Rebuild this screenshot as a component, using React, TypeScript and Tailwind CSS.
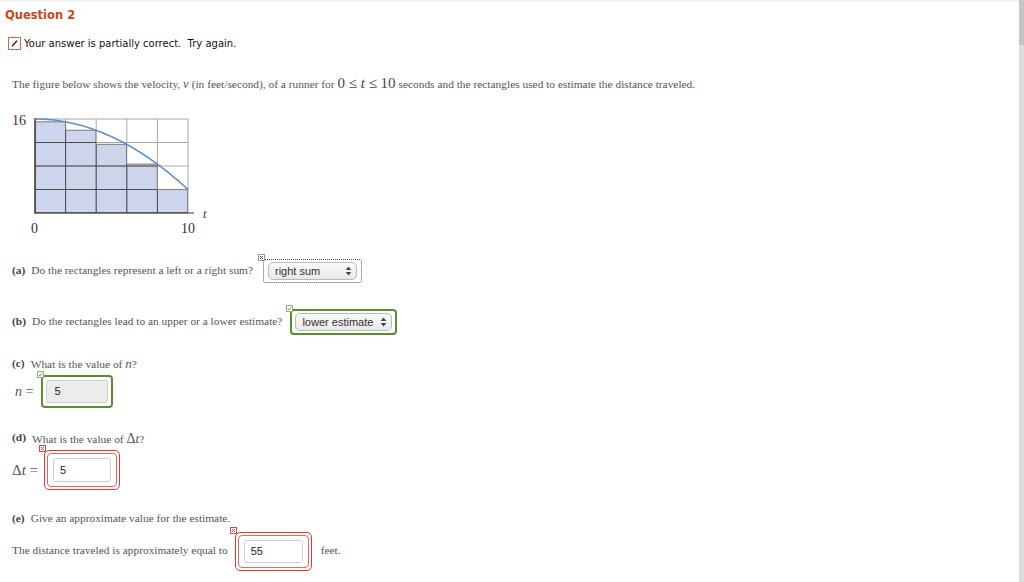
import React from "react";

const serif = { fontFamily: '"Liberation Serif", "Times New Roman", serif' };

function Arrows() {
  return (
    <svg width="7" height="10" viewBox="0 0 7 10" className="shrink-0">
      <path d="M3.5 0.5 L6.3 4 L0.7 4 Z" fill="#444" />
      <path d="M3.5 9.5 L6.3 6 L0.7 6 Z" fill="#444" />
    </svg>
  );
}

function Badge({ kind }: { kind: "x" | "xred" | "check" }) {
  const border = kind === "xred" ? "#e04a3a" : kind === "check" ? "#8fb57a" : "#9a9a9a";
  return (
    <svg width="7" height="7" viewBox="0 0 7 7" className="absolute -left-[6px] -top-[6px] bg-white">
      <rect x="0.5" y="0.5" width="6" height="6" fill="#fff" stroke={border} />
      {kind === "check" ? (
        <path d="M1.8 3.8 L3 5 L5.3 2" fill="none" stroke="#5e9a44" strokeWidth="0.9" />
      ) : (
        <path d="M2 2 L5 5 M5 2 L2 5" stroke={kind === "xred" ? "#e04a3a" : "#444"} strokeWidth="0.9" />
      )}
    </svg>
  );
}

function SelectBox({ label, w }: { label: string; w: string }) {
  return (
    <div
      className={`${w} flex items-center justify-between rounded-[5px] border border-[#b8b8b8] bg-gradient-to-b from-[#fafafa] to-[#e9e9e9] pl-[6px] pr-[4px] text-[11px] text-[#333]`}
      style={{ fontFamily: '"Liberation Sans", Arial, sans-serif' }}
    >
      <span>{label}</span>
      <Arrows />
    </div>
  );
}

function Chart() {
  const cols = [35, 65.6, 96.2, 126.8, 157.4, 188];
  const rows = [9, 32.5, 56, 79.5, 103];
  const tops = [11.8, 20.3, 34.4, 54.1, 79.5];
  return (
    <svg width="220" height="136" viewBox="0 0 220 136" className="block">
      <defs>
        <clipPath id="rc">
          {tops.map((t, i) => (
            <rect key={i} x={cols[i]} y={t} width={cols[i + 1] - cols[i]} height={103 - t} />
          ))}
        </clipPath>
      </defs>
      {tops.map((t, i) => (
        <rect key={i} x={cols[i]} y={t} width={cols[i + 1] - cols[i]} height={103 - t} fill="#cdd5ec" />
      ))}
      <g stroke="#a8a8a8" strokeWidth="1">
        {cols.map((c, i) => (
          <line key={"v" + i} x1={c} y1={9} x2={c} y2={103} />
        ))}
        {rows.map((r, i) => (
          <line key={"h" + i} x1={35} y1={r} x2={188} y2={r} />
        ))}
      </g>
      <g stroke="#4a4a4a" strokeWidth="1" clipPath="url(#rc)">
        {cols.map((c, i) => (
          <line key={"dv" + i} x1={c} y1={0} x2={c} y2={110} />
        ))}
        {rows.map((r, i) => (
          <line key={"dh" + i} x1={30} y1={r} x2={195} y2={r} />
        ))}
      </g>
      {tops.map((t, i) => (
        <line key={"t" + i} x1={cols[i]} y1={t} x2={cols[i + 1]} y2={t} stroke="#8a8a8a" strokeWidth="1.2" />
      ))}
      <line x1={35} y1={8} x2={35} y2={103.5} stroke="#333" strokeWidth="1.3" />
      <line x1={34.5} y1={103} x2={194} y2={103} stroke="#333" strokeWidth="1.1" />
      <path d="M35 9 Q111.5 9 188 79.5" fill="none" stroke="#5b8bd3" strokeWidth="1.6" />
      <g style={serif} fill="#333">
        <text x="12" y="15" fontSize="14">16</text>
        <text x="31" y="123" fontSize="14">0</text>
        <text x="181" y="123" fontSize="14">10</text>
        <text x="203" y="108" fontSize="12" fontStyle="italic">t</text>
      </g>
    </svg>
  );
}

export default function App() {
  return (
    <div className="flex h-[582px] w-[1024px] overflow-hidden bg-white">
      <div className="flex flex-1 flex-col">
        <div className="h-[2px] bg-[#f3f3f3]" />
        <div
          className="flex h-[28px] items-center pl-[5px] text-[11.5px] font-bold text-[#c8461e]"
          style={{ fontFamily: '"DejaVu Sans", Verdana, sans-serif' }}
        >
          Question 2
        </div>
        <div
          className="flex h-[26px] items-center pl-[8px] text-[10px] text-[#111]"
          style={{ fontFamily: '"DejaVu Sans", Verdana, sans-serif' }}
        >
          <svg width="13" height="13" viewBox="0 0 13 13" className="mr-[3px]">
            <rect x="0.5" y="0.5" width="12" height="12" fill="#fff" stroke="#d8653e" />
            <path d="M4 9.2 L9 3.8" stroke="#222" strokeWidth="1.3" />
          </svg>
          <span className="whitespace-pre">Your answer is partially correct.  Try again.</span>
        </div>
        <div className="flex h-[54px] items-center pl-[12px] text-[11.4px] text-[#555]" style={serif}>
          <span>
            The figure below shows the velocity, <i className="text-[13px]">v</i> (in feet/second), of a runner for{" "}
            <span className="text-[15px] text-[#444]">
              0 ≤ <i>t</i> ≤ 10
            </span>{" "}
            seconds and the rectangles used to estimate the distance traveled.
          </span>
        </div>
        <div className="h-[136px]">
          <Chart />
        </div>
        <div className="flex h-[50px] items-center pl-[12px] text-[11.4px] text-[#555]" style={serif}>
          <span className="font-bold text-[#444]">(a)</span>
          <span className="ml-[6px]">Do the rectangles represent a left or a right sum?</span>
          <div className="relative ml-[10px] rounded-[2px] border border-dotted border-[#555] px-[4px] py-[2px]">
            <Badge kind="x" />
            <SelectBox label="right sum" w="h-[18px] w-[89px]" />
          </div>
        </div>
        <div className="flex h-[52px] items-center pl-[12px] text-[11.4px] text-[#555]" style={serif}>
          <span className="font-bold text-[#444]">(b)</span>
          <span className="ml-[6px]">Do the rectangles lead to an upper or a lower estimate?</span>
          <div className="relative ml-[8px] rounded-[4px] border-2 border-[#5d8b2f] px-[3px] py-[2px]">
            <Badge kind="check" />
            <SelectBox label="lower estimate" w="h-[18px] w-[97px]" />
          </div>
        </div>
        <div className="flex h-[32px] items-center pl-[12px] text-[11.4px] text-[#555]" style={serif}>
          <span className="font-bold text-[#444]">(c)</span>
          <span className="ml-[6px]">
            What is the value of <i className="text-[13px]">n</i>?
          </span>
        </div>
        <div className="flex h-[22px] items-center pl-[15px] text-[#555]" style={serif}>
          <span className="whitespace-pre text-[14px]">
            <i>n</i> =
          </span>
          <div className="relative ml-[8px] rounded-[4px] border-2 border-[#5d8b2f] p-[3px]">
            <Badge kind="check" />
            <div
              className="flex h-[23px] w-[62px] items-center rounded-[3px] border border-[#cfcfcf] bg-[#ececec] pl-[7px] text-[11px] text-[#222]"
              style={{ fontFamily: '"Liberation Sans", Arial, sans-serif' }}
            >
              5
            </div>
          </div>
        </div>
        <div className="mt-[26px] flex h-[20px] items-center pl-[12px] text-[11.4px] text-[#555]" style={serif}>
          <span className="font-bold text-[#444]">(d)</span>
          <span className="ml-[6px]">
            What is the value of <span className="text-[14px]">Δ</span>
            <i className="text-[13px]">t</i>?
          </span>
        </div>
        <div className="flex h-[44px] items-center pl-[12px] text-[#555]" style={serif}>
          <span className="whitespace-pre text-[15px]">
            Δ<i>t</i> =
          </span>
          <div className="relative ml-[6px] rounded-[5px] border border-[#e0392b] p-[2px]">
            <Badge kind="xred" />
            <div className="rounded-[4px] border border-[#e8665c] px-[5px] py-[4px]">
              <div
                className="flex h-[24px] w-[58px] items-center rounded-[3px] border border-[#cfcfcf] bg-white pl-[6px] text-[11px] text-[#222]"
                style={{ fontFamily: '"Liberation Sans", Arial, sans-serif' }}
              >
                5
              </div>
            </div>
          </div>
        </div>
        <div className="mt-[14px] flex h-[26px] items-center pl-[12px] text-[11.4px] text-[#555]" style={serif}>
          <span className="font-bold text-[#444]">(e)</span>
          <span className="ml-[6px]">Give an approximate value for the estimate.</span>
        </div>
        <div className="flex h-[38px] items-center pl-[12px] text-[11.4px] text-[#555]" style={serif}>
          <span>The distance traveled is approximately equal to</span>
          <div className="relative ml-[7px] rounded-[5px] border border-[#e0392b] p-[2px]">
            <Badge kind="xred" />
            <div className="rounded-[4px] border border-[#e8665c] px-[5px] py-[4px]">
              <div
                className="flex h-[23px] w-[59px] items-center rounded-[3px] border border-[#cfcfcf] bg-white pl-[6px] text-[11px] text-[#222]"
                style={{ fontFamily: '"Liberation Sans", Arial, sans-serif' }}
              >
                55
              </div>
            </div>
          </div>
          <span className="ml-[9px]">feet.</span>
        </div>
      </div>
      <div className="flex w-[5px] flex-col bg-[#dedede]">
        <div className="h-[45px] bg-[#c4c4c4]" />
      </div>
    </div>
  );
}
